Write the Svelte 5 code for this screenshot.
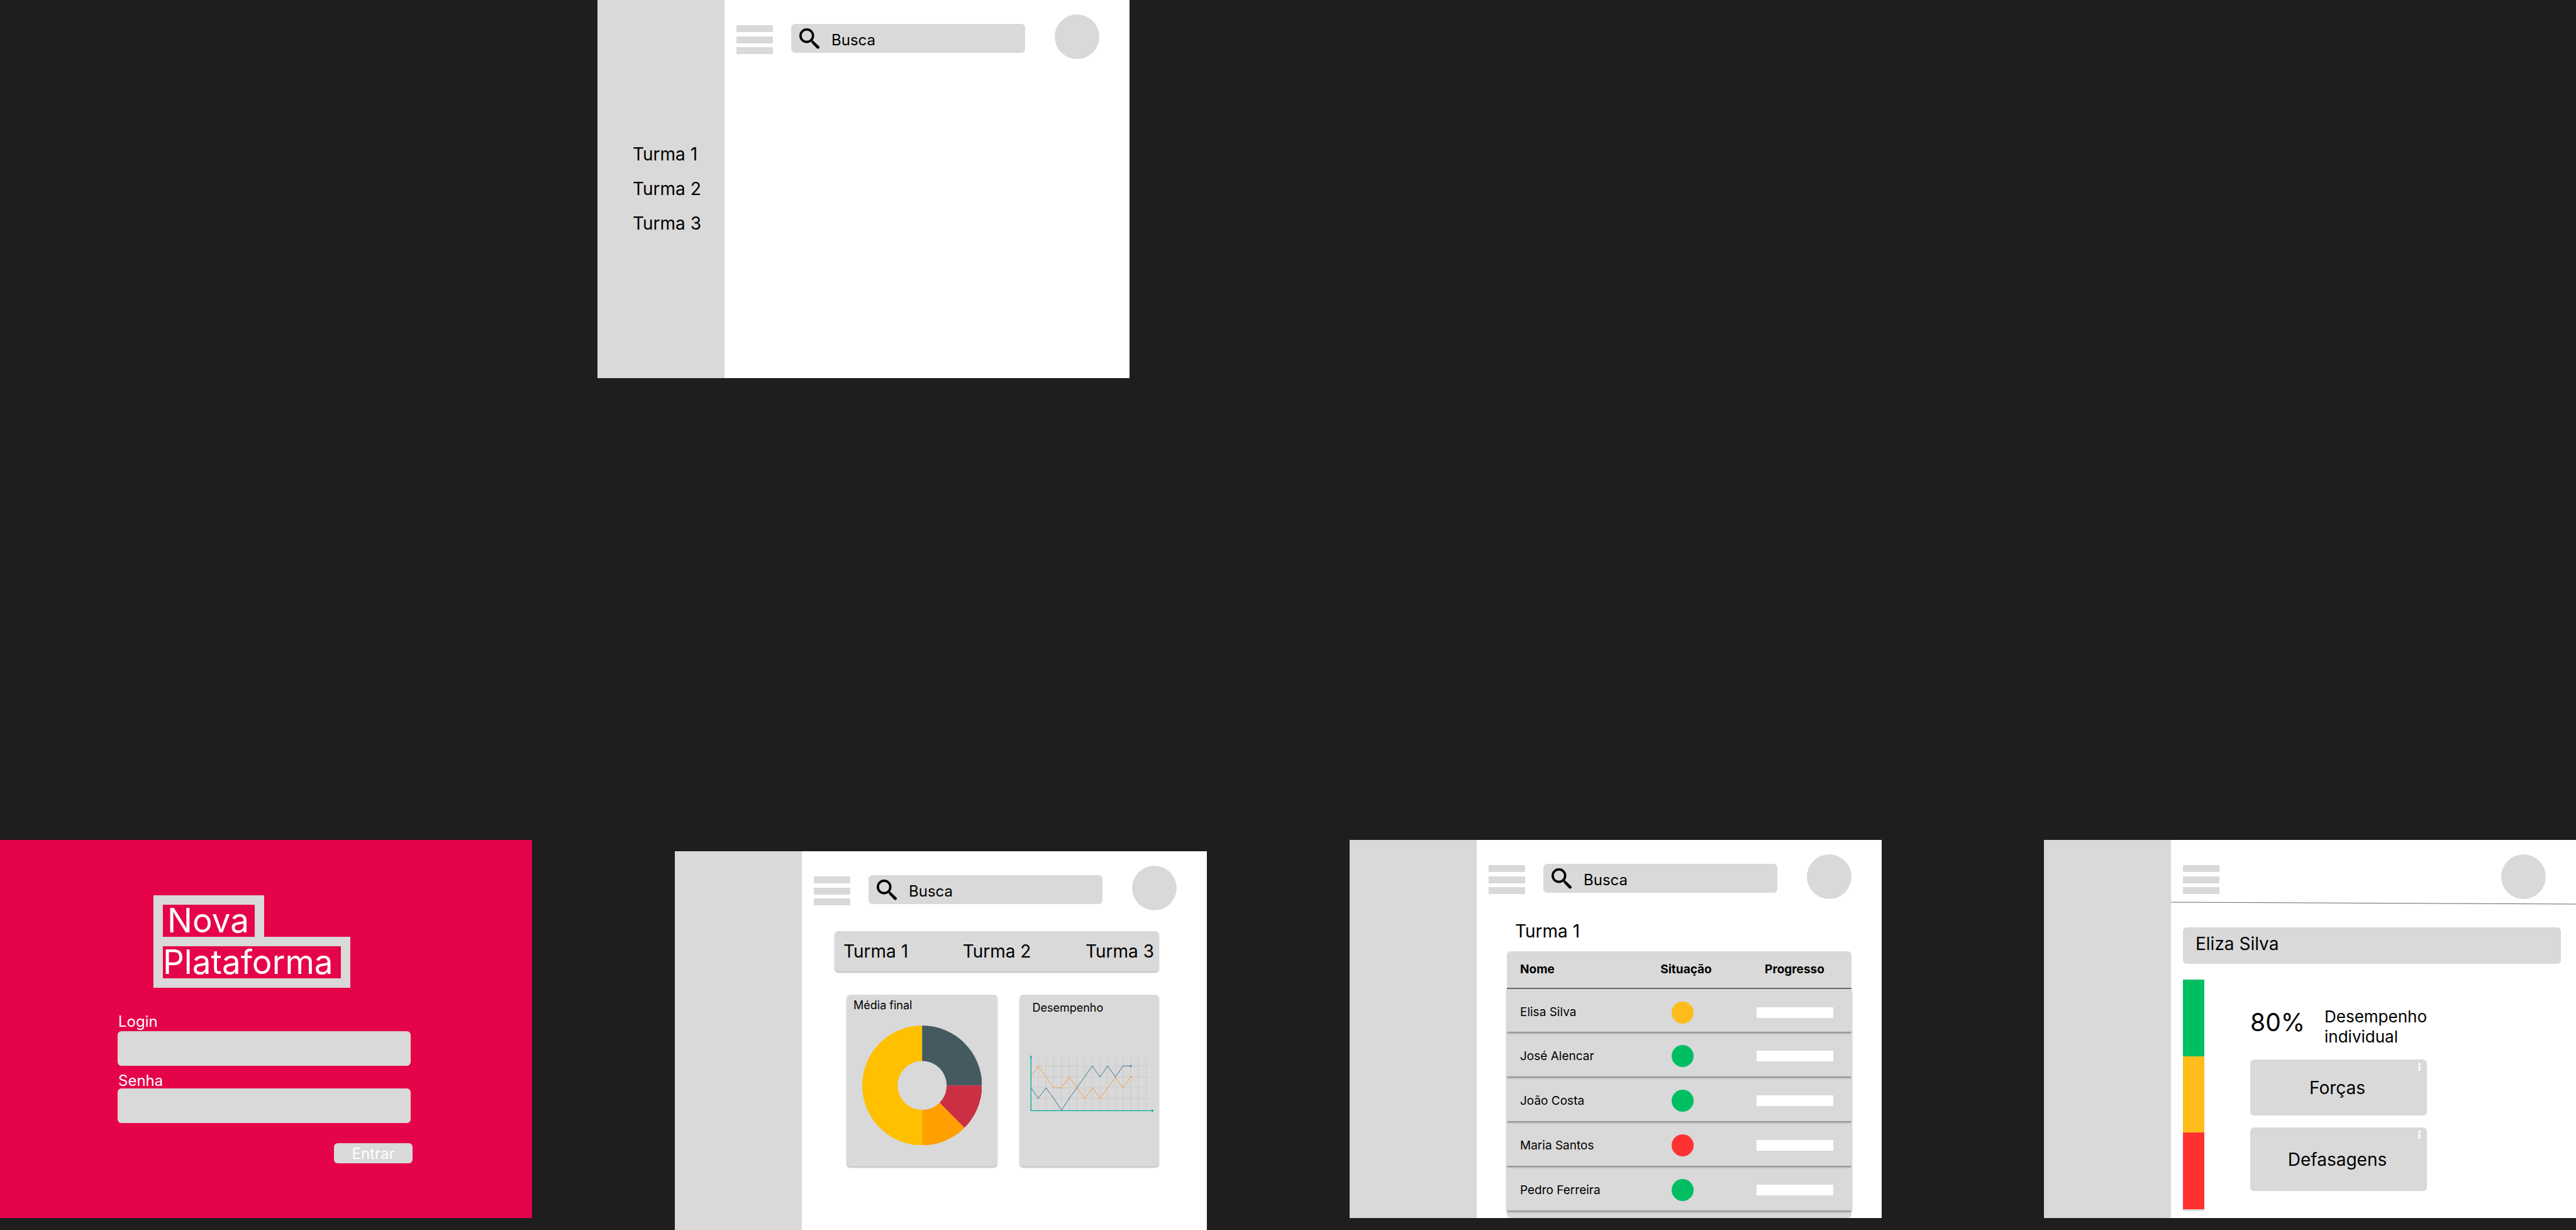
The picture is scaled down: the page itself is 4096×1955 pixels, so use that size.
<script>
  const turmas = ['Turma 1', 'Turma 2', 'Turma 3'];
  const alunos = [
    { nome: 'Elisa Silva', situacao: 'atencao' },
    { nome: 'José Alencar', situacao: 'bom' },
    { nome: 'João Costa', situacao: 'bom' },
    { nome: 'Maria Santos', situacao: 'critico' },
    { nome: 'Pedro Ferreira', situacao: 'bom' },
  ];
  const rotulos = { bom: 'Bom', atencao: 'Atenção', critico: 'Crítico' };
  const areas = ['Forças', 'Defasagens'];
  const colunas = [211, 274, 337, 400, 463, 525, 588, 650, 713, 775, 838, 900, 963, 1025, 1088];
  const linhas = [679, 768, 856, 943];
</script>

{#snippet topbar(id, busca)}
  <header class="topbar">
    <button class="menu" aria-label="Menu"><span></span><span></span><span></span></button>
    {#if busca}
      <div class="search">
        <svg viewBox="0 0 56 56" aria-hidden="true">
          <circle cx="20" cy="20" r="16.8" fill="none" stroke="#000" stroke-width="6.4" />
          <path d="M30 30 L36 36" stroke="#000" stroke-width="4" />
          <path d="M37 33 L54 49 Q55 51 54 53 L51 55 Q49 56 47 54 L33 39 V35 Z" fill="#000" />
        </svg>
        <input id={'busca-' + id} type="text" placeholder="Busca" aria-label="Busca" />
      </div>
    {/if}
    <button class="avatar" aria-label="Perfil"></button>
  </header>
{/snippet}

<div class="canvas">
  <div class="row upper">
    <section class="frame home">
      <nav class="side">
        {#each turmas as turma}<a href="#turma">{turma}</a>{/each}
      </nav>
      <main class="main">{@render topbar('inicio', true)}</main>
    </section>
  </div>

  <div class="row lower">
    <section class="frame login">
      <h1 class="logo"><span class="nova">Nova</span><span class="plataforma">Plataforma</span></h1>
      <form>
        <label for="login" class="first">Login</label>
        <input id="login" type="text" />
        <label for="senha" class="second">Senha</label>
        <input id="senha" type="password" />
        <button type="button">Entrar</button>
      </form>
    </section>

    <section class="frame dashboard">
      <aside class="side"></aside>
      <div class="main">
        {@render topbar('painel', true)}
        <nav class="tabs">
          {#each turmas as turma}<a href="#turma">{turma}</a>{/each}
        </nav>
        <div class="cards">
          <article class="card media">
            <h2>Média final</h2>
            <svg viewBox="-100 -100 200 200" role="img" aria-label="Média final">
              <path fill="#ffc000" d="M0 100 A100 100 0 0 1 0 -100 L0 -41 A41 41 0 0 0 0 41 Z" />
              <path fill="#455a60" d="M0 -100 A100 100 0 0 1 100 0 L41 0 A41 41 0 0 0 0 -41 Z" />
              <path fill="#cb2f43" d="M100 0 A100 100 0 0 1 70.7 70.7 L29 29 A41 41 0 0 0 41 0 Z" />
              <path fill="#ffa000" d="M70.7 70.7 A100 100 0 0 1 0 100 L0 41 A41 41 0 0 0 29 29 Z" />
            </svg>
          </article>
          <article class="card desempenho">
            <h2>Desempenho</h2>
            <svg viewBox="140 585 1015 475" role="img" aria-label="Desempenho">
              <g stroke="#c6c6c6" stroke-width="4">
                {#each colunas as x}<line x1={x} x2={x} y1="610" y2="1040" />{/each}
                {#each linhas as y}<line x1="152" x2="1120" y1={y} y2={y} />{/each}
              </g>
              <g fill="none" stroke-width="5">
                <polyline stroke="#fa9a3a" points="152,768 211,679 337,856 400,856 463,768 588,943 652,856 713,943 838,768 900,856 965,764" />
                <polyline stroke="#35728f" points="152,856 211,943 274,856 337,943 400,1039 463,943 650,679 712,768 775,679 838,768 900,679 962,679" />
                <path stroke="#00ae9d" stroke-width="7" d="M152 605 V1042 H1138" />
              </g>
              <path fill="#00ae9d" d="M152 590 L161 611 H143 Z M1151 1042 L1134 1028 V1055 Z" />
              <path fill="#35728f" d="M973 679 L960 668 V690 Z" />
              <path fill="#fa9a3a" d="M970 757 L954 766 L970 777 Z" />
            </svg>
          </article>
        </div>
      </div>
    </section>

    <section class="frame class">
      <aside class="side"></aside>
      <div class="main">
        {@render topbar('turma', true)}
        <h2 class="title">Turma 1</h2>
        <div class="sheet">
          <table>
            <thead>
              <tr><th class="name">Nome</th><th class="status">Situação</th><th class="progress">Progresso</th></tr>
            </thead>
            <tbody>
              {#each alunos as aluno}
                <tr>
                  <td class="name">{aluno.nome}</td>
                  <td class="status"><span class="dot {aluno.situacao}" role="img" aria-label={rotulos[aluno.situacao]}></span></td>
                  <td class="progress"><span></span></td>
                </tr>
              {/each}
            </tbody>
          </table>
        </div>
      </div>
    </section>

    <section class="frame student">
      <aside class="side"></aside>
      <div class="main">
        {@render topbar('aluno', false)}
        <svg class="rule" viewBox="0 0 645 5" preserveAspectRatio="none" aria-hidden="true">
          <line x1="0" y1="1" x2="645" y2="4" stroke="#000" stroke-width="0.6" />
        </svg>
        <h2 class="student-name">Eliza Silva</h2>
        <div class="detail">
          <div class="scale"><span class="bom"></span><span class="atencao"></span><span class="critico"></span></div>
          <div class="info">
            <div class="score"><strong>80%</strong><p>Desempenho<br />individual</p></div>
            {#each areas as area}
              <div class="area">
                {area}
                <button class="more" aria-label={'Opções de ' + area}><i></i><i></i><i></i></button>
              </div>
            {/each}
          </div>
        </div>
      </div>
    </section>
  </div>
</div>

<style>
  :global(body) { margin: 0; background: #1e1e1e; }
  .canvas {
    font-family: Inter, sans-serif;
    font-size: 28px;
    line-height: 34px;
    color: #000;
    min-height: 100vh;
    overflow: hidden;
  }
  .canvas * { box-sizing: border-box; }
  h1, h2, p { margin: 0; font-size: inherit; font-weight: 400; }
  button, input { border: 0; padding: 0; margin: 0; font: inherit; color: inherit; background: #d9d9d9; }
  a { color: inherit; text-decoration: none; }

  .row { display: grid; align-items: start; }
  .upper { grid-template-columns: minmax(0, 950fr) minmax(0, 846fr) minmax(0, 2300fr); }
  .upper .frame { grid-column: 2; }
  .lower {
    grid-template-columns:
      minmax(0, 846fr) minmax(0, 227fr) minmax(0, 846fr) minmax(0, 227fr)
      minmax(0, 846fr) minmax(0, 258fr) minmax(0, 846fr);
    margin-top: 734px;
  }
  .login { grid-column: 1; }
  .lower .dashboard { grid-column: 3; margin-top: 18px; min-height: 602px; }
  .class { grid-column: 5; }
  .student { grid-column: 7; }

  .frame { display: flex; min-height: 601px; background: #fff; }
  .side { flex: 0 0 202px; background: #d9d9d9; }
  .main { flex: 1; min-width: 0; display: flex; flex-direction: column; }
  .home .side { display: flex; flex-direction: column; gap: 21px; padding: 228px 0 0 56px; }

  .topbar { display: flex; align-items: flex-start; padding: 23px 48px 0 19px; }
  .menu { flex: 0 0 58px; height: 46px; margin: 17px 29px 0 0; background: none; display: flex; flex-direction: column; justify-content: space-between; }
  .menu span { width: 100%; height: 11px; background: #d9d9d9; }
  .search { flex: 1 1 0; min-width: 0; display: flex; height: 46px; margin: 15px 47px 0 0; padding-left: 13px; gap: 18px; background: #d9d9d9; border-radius: 6px; }
  .search svg { flex: 0 0 33px; height: 33px; margin-top: 7px; }
  .search input { flex: 1 1 0; min-width: 0; padding-top: 5px; background: none; font-size: 24px; border-radius: 6px; }
  .search input::placeholder { color: #000; opacity: 1; }
  .avatar { flex: 0 0 71px; height: 71px; margin-left: auto; border-radius: 50%; }

  .login { flex-direction: column; background: #e50349; color: #fff; font-size: 24px; line-height: 25px; padding: 88px 190px 0 187px; }
  .logo { margin-left: 57px; font-size: 53px; line-height: 50px; display: flex; flex-direction: column; align-items: flex-start; }
  .logo span { border: 15px solid #d9d9d9; height: 81px; }
  .logo .nova { width: 176px; border-bottom: 0; height: 66px; padding-left: 7px; }
  .logo .plataforma { width: 313px; }
  .login form { display: flex; flex-direction: column; margin-top: 41px; }
  .login label { padding-left: 1px; }
  .login .first { margin-bottom: 3px; }
  .login .second { margin-top: 11px; }
  .login input { height: 55px; border-radius: 6px; margin-right: 3px; }
  .login form button { align-self: flex-end; width: 125px; height: 32px; margin-top: 32px; border-radius: 6px; }

  .tabs { display: flex; justify-content: space-between; align-items: center; height: 64px; margin: 33px 76px 0 52px; padding: 0 8px 0 14px; background: #d9d9d9; border-radius: 6px; box-shadow: 0 2px 2px rgba(0, 0, 0, 0.25); }
  .cards { display: grid; grid-template-columns: minmax(0, 241fr) minmax(0, 222fr); column-gap: 35px; margin: 37px 76px 0 71px; }
  .card { height: 273px; background: #d9d9d9; border-radius: 6px; box-shadow: 0 2px 2px rgba(0, 0, 0, 0.25); }
  .card h2 { font-size: 18px; line-height: 22px; }
  .media { padding: 6px 25px 0; }
  .media h2 { margin-left: -14px; }
  .media svg { display: block; width: 100%; margin-top: 21px; }
  .desempenho { padding: 10px 7px 0 16px; }
  .desempenho h2 { padding-left: 4px; }
  .desempenho svg { display: block; width: 100%; margin-top: 63px; }

  .title { margin: 34px 0 0 61px; }
  .sheet { margin: 15px 48px 0; background: #d9d9d9; border-radius: 6px; padding-bottom: 12px; }
  table { width: 100%; border-collapse: separate; border-spacing: 0; table-layout: fixed; font-size: 19px; line-height: 22px; }
  th { height: 60px; padding: 0; border-bottom: 2px solid #696969; }
  td { height: 71px; padding: 6px 0 0; }
  tbody tr:first-child td { height: 68px; }
  tbody tr { box-shadow: 0 2px 3px rgba(0, 0, 0, 0.4); }
  .name { width: 220px; padding-left: 21px; text-align: left; }
  .status { width: 130px; text-align: center; }
  td.status { padding-right: 12px; }
  .dot { display: block; width: 35px; height: 35px; margin: 0 auto; border-radius: 50%; }
  .progress { padding-left: 17px; }
  .progress span { display: block; width: 122px; height: 17px; margin: 0 auto; background: #fff; }
  .bom { background: #00bf63; }
  .atencao { background: #ffbd1b; }
  .critico { background: #ff3131; }

  .rule { width: 100%; height: 5px; margin-top: 4px; }
  .student-name { margin: 36px 24px 0 19px; height: 58px; padding: 9px 20px; background: #d9d9d9; border-radius: 6px; }
  .detail { display: flex; margin: 25px 0 0 19px; gap: 73px; }
  .scale { width: 34px; height: 368px; padding-bottom: 3px; background: #d9d9d9; display: flex; flex-direction: column; }
  .scale span { flex: 1; }
  .info { flex: 0 0 281px; }
  .score { display: flex; justify-content: space-between; padding: 43px 0 20px; font-size: 26px; line-height: 32px; }
  .score p { flex: 0 0 161px; }
  .score strong { font-weight: 400; font-size: 39px; line-height: 50px; }
  .area { position: relative; display: flex; align-items: center; justify-content: center; height: 89px; padding-right: 4px; background: #d9d9d9; border-radius: 6px; }
  .area + .area { height: 101px; margin-top: 19px; }
  .more { position: absolute; top: 5px; right: 10px; width: 4px; height: 13px; background: none; display: flex; flex-direction: column; justify-content: space-between; }
  .more i { width: 4px; height: 4px; border-radius: 50%; background: #fff; }
</style>
